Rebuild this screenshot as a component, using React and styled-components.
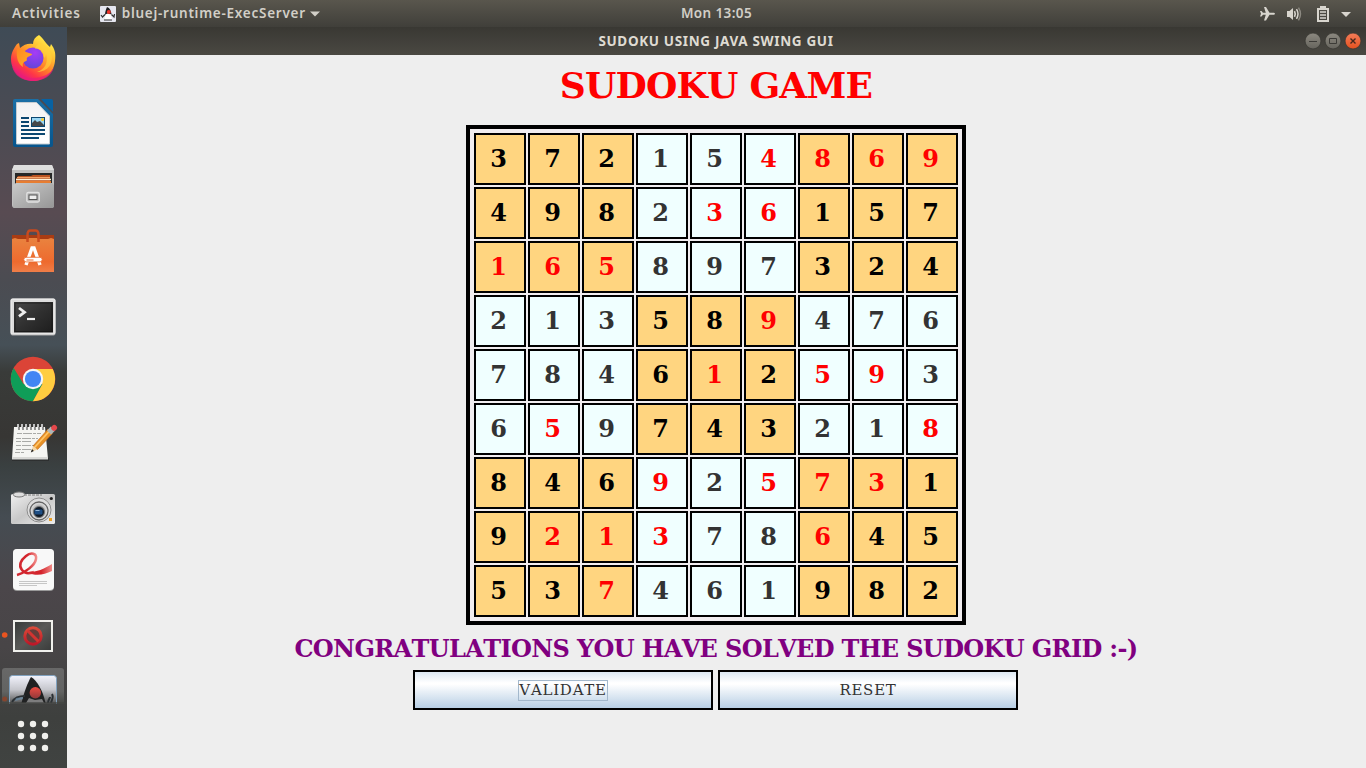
import React from 'react';
import styled, { createGlobalStyle } from 'styled-components';

const Global = createGlobalStyle`
  * { box-sizing: border-box; }
  body { margin: 0; overflow: hidden; background: #eee; }
`;

const Desktop = styled.div`
  width: 1366px;
  height: 768px;
  display: flex;
  flex-direction: column;
  font-family: "Noto Sans", sans-serif;
`;

const TopBar = styled.header`
  height: 27px;
  display: grid;
  grid-template-columns: 1fr auto 1fr;
  align-items: center;
  padding: 0 14px 0 12px;
  background: linear-gradient(#59564d, #403f3a);
  color: #dfdbd2;
`;

const BarGroup = styled.div`
  display: flex;
  align-items: center;
  justify-content: ${p => (p.$end ? 'flex-end' : 'flex-start')};
`;

const BarText = styled.span`
  font-size: 13.5px;
  line-height: 24px;
  padding-bottom: 1px;
  font-weight: 600;
  white-space: nowrap;
  letter-spacing: ${p => p.$track || '0'};
  color: #d2cfc7;
`;

const AppMenu = styled.div`
  display: flex;
  align-items: center;
  margin-left: 19px;
  & > svg:first-child { margin-right: 6px; }
  & > svg:last-child { margin-left: 4px; }
`;

const Clock = styled(BarText)`
  margin-left: 69px;
`;

const Body = styled.div`
  flex: 1;
  display: flex;
`;

const Dock = styled.nav`
  width: 67px;
  height: 741px;
  display: flex;
  flex-direction: column;
  background: linear-gradient(#3f4b56 0, #4b4b53 95px, #584b52 185px, #4b4c52 255px, #465057 318px, #393b39 345px, #373634 410px, #3a4041 440px, #454c52 490px, #4b464a 560px, #484547 620px, #3e403e 690px, #404341 741px);
  & > svg { display: block; flex: none; }
`;

const Window = styled.main`
  flex: 1;
  display: flex;
  flex-direction: column;
`;

const TitleBar = styled.div`
  height: 28px;
  display: grid;
  grid-template-columns: 1fr auto 1fr;
  align-items: center;
  padding-right: 4px;
  background: linear-gradient(#393833, #4a4842);
`;

const WindowTitle = styled.h1`
  grid-column: 2;
  margin: 0 0 0 3px;
  font-size: 13.5px;
  line-height: 27px;
  font-weight: 700;
  white-space: nowrap;
  letter-spacing: ${p => p.$track};
  color: #dfdbd2;
`;

const WindowControls = styled.div`
  display: flex;
  justify-content: flex-end;
`;

const Content = styled.section`
  flex: 1;
  display: flex;
  flex-direction: column;
  align-items: center;
  padding-right: 1px;
  background: #eee;
  font-family: "DejaVu Serif", serif;
`;

const GameTitle = styled.h2`
  margin: 9px 0 0;
  height: 61px;
  font-size: 36px;
  line-height: 42px;
  font-weight: 700;
  font-kerning: none;
  letter-spacing: -0.8px;
  white-space: nowrap;
  color: #f00;
`;

const Board = styled.div`
  display: grid;
  grid-template-columns: repeat(9, 52px);
  grid-auto-rows: 52px;
  gap: 2px;
  padding: 4px;
  border: 4px solid #000;
  background: #f1edf0;
`;

const Cell = styled.div`
  display: flex;
  align-items: center;
  justify-content: center;
  padding-right: 3px;
  border: 2px solid #000;
  font-size: 24px;
  line-height: 48px;
  font-weight: 700;
  background: ${p => (p.$shaded ? '#ffd580' : '#f0ffff')};
  color: ${p => (p.$entered ? '#f00' : p.$shaded ? '#000' : '#333')};
`;

const Message = styled.p`
  margin: 9px 0 0;
  height: 36px;
  font-size: 24px;
  line-height: 30px;
  font-weight: 700;
  font-kerning: none;
  letter-spacing: -0.65px;
  white-space: nowrap;
  color: #800080;
`;

const Actions = styled.div`
  display: flex;
  gap: 5px;
  margin-right: 2px;
`;

const Button = styled.button`
  width: 300px;
  height: 40px;
  padding: 0 0 0 1px;
  border: 2px solid #000;
  display: flex;
  align-items: center;
  justify-content: center;
  background: linear-gradient(#dde8f3 0%, #fff 30%, #fff 34%, #b8cfe5 100%);
  font: 15px/19px "DejaVu Serif", serif;
  font-kerning: none;
  letter-spacing: 0.75px;
  color: #333;
`;

const Label = styled.span`
  border: 1px solid ${p => (p.$focused ? '#a3b8cc' : 'transparent')};
`;

const DockSvg = ({ height = 64, children }) => (
  <svg width="67" height={height} viewBox={`0 0 67 ${height}`}>{children}</svg>
);

const Firefox = () => (
  <DockSvg>
    <defs>
      <linearGradient id="ffBody" x1="0.85" y1="0.05" x2="0.25" y2="0.95">
        <stop offset="0" stopColor="#fff44f" /><stop offset=".3" stopColor="#ffc131" />
        <stop offset=".58" stopColor="#ff7a2a" /><stop offset=".8" stopColor="#ff3647" /><stop offset="1" stopColor="#e31587" />
      </linearGradient>
      <linearGradient id="ffHead" x1="0" y1="0" x2="1" y2="1">
        <stop offset="0" stopColor="#ff8a20" /><stop offset="1" stopColor="#ffae28" />
      </linearGradient>
      <radialGradient id="ffGlobe" cx=".6" cy=".25" r=".9">
        <stop offset="0" stopColor="#a63cf5" /><stop offset=".6" stopColor="#7542e5" /><stop offset="1" stopColor="#5b4bc8" />
      </radialGradient>
    </defs>
    <path fill="url(#ffBody)" d="M39 8c5 4 6 8 11 12l1-3c4 5 5 10 4 17-1 12-11 20-22 20S11 45 11 32c0-6 3-11 6-15l2-1 1 5c4-4 9-5 13-4 0-4 2-7 6-9z" />
    <path fill="#e91e78" opacity=".75" d="M12 39c4 8 12 12 21 12s18-4 21-11c-2 9-11 14-21 14s-19-5-21-15z" />
    <circle cx="33" cy="31" r="10.5" fill="url(#ffGlobe)" />
    <path fill="url(#ffHead)" d="M17 22c4 0 7 1 9 3l6 2c0 2-4 2-5 4-1 1 1 2-1 3-3 1-4 3-3 6-5-3-7-9-6-18z" />
    <path fill="#ffd23c" d="M35 22c6-1 9 3 9 9 1-1 2-2 2-4 3 9-2 16-9 18 11 0 17-9 14-19l-8-9c-4-1-7 1-8 5z" opacity=".65" />
  </DockSvg>
);

const Writer = () => (
  <DockSvg>
    <defs>
      <linearGradient id="wrFrame" x2="0" y2="1"><stop stopColor="#1b6fa5" /><stop offset="1" stopColor="#06558d" /></linearGradient>
      <linearGradient id="wrPage" x2="0" y2="1"><stop stopColor="#f2f2f2" /><stop offset="1" stopColor="#fff" /></linearGradient>
    </defs>
    <path fill="url(#wrFrame)" d="M15 8h23l15 15v31q0 2-2 2H15q-2 0-2-2V10q0-2 2-2z" />
    <path fill="#0862a3" d="M41 8h10q2 0 2 2v11z" />
    <path fill="url(#wrPage)" stroke="#c6ccd0" d="M16.500 11.500h20L49.500 25v28h-33z" />
    <path stroke="#0b4770" strokeWidth="2" d="M21 27h8M21 31h8M21 35h8M21 39h24M21 43h24M21 47h18" />
    <path fill="#0b4770" d="M31 26h14v10H31z" />
    <path fill="#9ad7f4" d="M32 27h12v8H32z" />
    <circle cx="42.500" cy="28.500" r="1.500" fill="#ffc926" />
    <path fill="#45484a" d="M32 35v-3l3-3 2 2 3-1 4 4v1z" />
  </DockSvg>
);

const Files = () => (
  <DockSvg>
    <defs>
      <linearGradient id="fiFront" x2="1" y2="1"><stop stopColor="#c9c9c9" /><stop offset="1" stopColor="#969696" /></linearGradient>
    </defs>
    <path fill="#c0c0c0" d="M14 10h38l2 5v35q0 3-3 3H15q-3 0-3-3V15z" />
    <path fill="#dedede" d="M14 10h38l2 5H12z" />
    <path fill="#272727" d="M15 18h37v11H15z" />
    <path fill="#ba5321" d="M18 21h13l2-1h17v9H16v-5z" />
    <path stroke="#f4a46a" strokeWidth="1.200" d="M17 22.500h33" />
    <path stroke="#fff2d8" strokeWidth="1.500" d="M16 24.500h35" />
    <path stroke="#e77d31" strokeWidth="2" d="M16 27h35" />
    <path fill="url(#fiFront)" d="M16 28h36l2 2v21q0 2-2 2H15q-2 0-2-2V30z" />
    <rect x="26.800" y="37.500" width="12.500" height="9.500" rx="1.500" fill="#b5b5b5" stroke="#e1e1e1" strokeWidth="1.300" />
    <rect x="29" y="40" width="8" height="4.500" fill="#eee" stroke="#555" />
  </DockSvg>
);

const Software = () => (
  <DockSvg>
    <defs><linearGradient id="swBag" x2="0" y2="1"><stop stopColor="#e9833f" /><stop offset=".7" stopColor="#ee6a2e" /><stop offset="1" stopColor="#f07e48" /></linearGradient></defs>
    <path fill="#a93c13" d="M12 16h42v4H12z" />
    <path fill="url(#swBag)" d="M12 20l3-1 3 1h10l1-1h8l1 1h10l3-1 3 1v33H12z" />
    <path fill="none" stroke="#c94a1e" strokeWidth="2.500" d="M27.500 23v-7q0-4.500 3-4.500h5q3 0 3 4.500v7" />
    <path fill="none" stroke="#fff" strokeWidth="3.400" d="M26 46l6-17h2l6 17" />
    <rect x="23.800" y="38.300" width="18.400" height="4.600" rx="2.300" fill="#fff" stroke="#eb6a2e" strokeWidth=".8" />
    <path stroke="#eb6a2e" strokeWidth="1" d="M26.500 41h7" />
  </DockSvg>
);

const Terminal = () => (
  <DockSvg>
    <defs><linearGradient id="teScreen" x2="1" y2="1"><stop stopColor="#474747" /><stop offset=".5" stopColor="#303030" /><stop offset="1" stopColor="#1d1d1d" /></linearGradient></defs>
    <rect x="10.500" y="15.500" width="45" height="37" rx="2" fill="#aaa" />
    <rect x="11" y="16" width="44" height="35" rx="1.500" fill="#dcdcdc" stroke="#f3f3f3" />
    <rect x="14" y="19" width="39" height="30.500" fill="url(#teScreen)" />
    <rect x="15" y="20" width="37" height="28.500" fill="none" stroke="#111" opacity=".6" />
    <path fill="none" stroke="#eee" strokeWidth="2.800" d="M19 25l5.500 4.200-5.500 4.200" />
    <path stroke="#eee" strokeWidth="2.200" d="M27 36h8" />
  </DockSvg>
);

const Chrome = () => (
  <DockSvg>
    <circle cx="33" cy="32" r="22.300" fill="#db4437" />
    <path fill="#0f9d58" d="M13.700 21A22.300 22.300 0 0 0 33 54.300L42.500 37 33 32 23.500 37z" />
    <path fill="#ffcd40" d="M33 54.300A22.300 22.300 0 0 0 52.700 22H33v10l9.500 5z" />
    <circle cx="33" cy="32" r="10.200" fill="#f5f5f5" />
    <circle cx="33" cy="32" r="8.100" fill="#4285f4" />
  </DockSvg>
);

const Notes = () => (
  <DockSvg>
    <path fill="#222" opacity=".5" d="M12 47h37v3H12z" />
    <path fill="#f5f5f2" d="M14 16h31l3 32H12z" />
    <path fill="#d8d8d5" d="M12.200 46h35.600l.2 2.500H12z" />
    <path stroke="#a9aaa7" strokeDasharray="5 1 9 1 3 1" d="M17 22.500h24M16 27.500h22M16 30.500h15M16 34.500h19M16 38.500h15M15 41.500h9" />
    <path stroke="#eee" strokeWidth="1.500" d="M18 13v5M22 13v5M26 13v5M30 13v5M34 13v5M38 13v5M42 13v5" />
    <path stroke="#333" strokeWidth="1" d="M19 16v3M23 16v3M27 16v3M31 16v3M35 16v3M39 16v3M43 16v3" />
    <path fill="#e79125" stroke="#bd6215" strokeWidth=".6" d="M33 35L48 18l4.500 4.500-15 16z" />
    <path stroke="#ffc468" strokeWidth="1.800" d="M34.500 36.500L49.500 20" />
    <path fill="#f5d6a4" d="M33 35l4.500 3.500-6.500 2.500z" /><path fill="#222" d="M32 38l1.800 2-3 1.500z" />
    <path stroke="#aeb6b8" strokeWidth="6" d="M49 21.500l4-4" />
    <path stroke="#e5474a" strokeWidth="5.500" strokeLinecap="round" d="M54 17l.3-.3" />
  </DockSvg>
);

const Camera = () => (
  <DockSvg>
    <defs>
      <linearGradient id="caBody" x2="1" y2="1"><stop stopColor="#f0f0f0" /><stop offset=".5" stopColor="#c8c8c8" /><stop offset="1" stopColor="#ededed" /></linearGradient>
      <radialGradient id="caLens"><stop stopColor="#091629" /><stop offset=".4" stopColor="#152f50" /><stop offset=".5" stopColor="#aaa" /><stop offset="1" stopColor="#ececec" /></radialGradient>
    </defs>
    <rect x="11" y="19" width="44" height="30" rx="1.500" fill="url(#caBody)" />
    <path stroke="#777" strokeDasharray="3 1" d="M24 20h18" />
    <ellipse cx="19" cy="19.500" rx="5.800" ry="2.500" fill="#ddd" stroke="#777" />
    <circle cx="39" cy="35" r="12" fill="#ddd" stroke="#8e8e8e" />
    <circle cx="39" cy="36" r="9" fill="url(#caLens)" stroke="#646464" strokeWidth="1.300" />
    <circle cx="39" cy="37" r="5.500" fill="#111b27" stroke="#777" />
    <rect x="34.500" y="34.500" width="8" height="5" rx="1" fill="#1e4e84" />
    <path stroke="#8fb3d7" d="M35.500 35.500h4" />
    <circle cx="51.300" cy="23.500" r="1.600" fill="#202020" /><path fill="#eca126" d="M49 43h3v3h-3z" />
  </DockSvg>
);

const Evince = () => (
  <DockSvg>
    <defs><linearGradient id="evRed"><stop stopColor="#d12b33" /><stop offset=".55" stopColor="#d4232b" /><stop offset="1" stopColor="#f18b88" /></linearGradient></defs>
    <rect x="13" y="10" width="41" height="42" rx="4" fill="#999" />
    <rect x="13" y="10" width="41" height="41" rx="4" fill="#f8f8f8" />
    <path fill="none" stroke="url(#evRed)" strokeWidth="2.500" d="M17 36c7-2 18-9 19-16 1-6-5-7-10-3s-8 9-4 14c3 4 7 4 12 2" />
    <path fill="url(#evRed)" d="M28 33c9 0 16-3 24-8v7c-8 4-16 5-24 2z" />
    <path stroke="#c6c6c6" d="M19 42.500h28M19 44.500h28M19 46.500h18" />
  </DockSvg>
);

const BlockedScreen = () => (
  <DockSvg>
    <defs>
      <linearGradient id="bsFill" x2="1" y2="1"><stop stopColor="#373a39" /><stop offset=".5" stopColor="#595957" /><stop offset="1" stopColor="#393b3a" /></linearGradient>
      <linearGradient id="bsRed" x2="0" y2="1"><stop stopColor="#d94b39" /><stop offset="1" stopColor="#bd1828" /></linearGradient>
    </defs>
    <circle cx="4.700" cy="32" r="2.800" fill="#e95420" />
    <rect x="14" y="18" width="38" height="30" fill="url(#bsFill)" stroke="#f0f0ec" strokeWidth="2" />
    <circle cx="33" cy="33" r="8.200" fill="#653d3a" stroke="url(#bsRed)" strokeWidth="3" />
    <path stroke="#d33431" strokeWidth="3" d="M27.500 27.500l11 11" />
  </DockSvg>
);

const Duke = () => (
  <DockSvg height={37}>
    <defs>
      <linearGradient id="duTile" x2="0" y2="1"><stop stopColor="#f2f3fc" /><stop offset=".5" stopColor="#c5c6cc" /><stop offset="1" stopColor="#4d4e4e" /></linearGradient>
      <linearGradient id="duNose" x2="0" y2="1"><stop stopColor="#ee4b42" /><stop offset="1" stopColor="#92393a" /></linearGradient>
      <linearGradient id="duShelf" x2="0" y2="1"><stop stopColor="#686868" /><stop offset=".65" stopColor="#626362" /><stop offset="1" stopColor="#454744" /></linearGradient>
    </defs>
    <path fill="url(#duShelf)" d="M2 37V4q0-3 3-3h56q3 0 3 3v33z" />
    <circle cx="4.700" cy="32" r="2.500" fill="#85452f" />
    <path fill="url(#duTile)" stroke="#81a2c0" d="M9.500 37V11.500q0-3 3-3h41q3 0 3 3V37" />
    <path fill="#202122" d="M31 10c6 3 12 14 14.500 26H21.500C24 25 28 15 31 10z" />
    <path fill="#a5a5a5" d="M29 31l6 2 7-1 2 4H26z" opacity=".7" />
    <circle cx="35.300" cy="25.700" r="5.700" fill="url(#duNose)" />
    <path fill="none" stroke="#2b3034" strokeWidth="2" d="M12 35c3-5 8-6 13-6M48 36c0-4 2-4 2-6M51 36c1-4 3-6 1-9" />
    <path fill="#6689a2" d="M16 31l7-1 0 2-8 2z" opacity=".7" />
    <path fill="#424441" d="M0 35h67v2H0z" opacity=".65" />
  </DockSvg>
);

const AppsGrid = () => (
  <DockSvg>
    {[20, 32, 44].map(y => [21, 33, 45].map(x => <circle key={`${x}-${y}`} cx={x} cy={y} r="3.200" fill="#f0f0ed" />))}
  </DockSvg>
);

const DukeSmall = () => (
  <svg width="16" height="16" viewBox="0 0 16 16">
    <rect width="16" height="16" rx="1" fill="#e6e7f0" />
    <path fill="#1e1e20" d="M7 1c3 1 4 4 4.500 7L9 9 7 8 5 9c0-3 1-6 2-8z" />
    <path fill="#fff" d="M5.500 8.500l2-1 3.500 1 1 5H4.500z" />
    <path fill="none" stroke="#333" strokeWidth="1.200" d="M5 8.500L2.500 11 1 9M11.500 8.500L14 11l.5-3M4 14h8" />
    <circle cx="8.800" cy="6" r="2" fill="#ed332c" />
  </svg>
);

const Caret = () => (
  <svg width="10" height="6" viewBox="0 0 10 6"><path fill="#d2cfc7" d="M0 .5h10L5 5.500z" /></svg>
);

const StatusIcons = () => (
  <svg width="92" height="20" viewBox="0 0 92 20">
    <path fill="#d8d5ce" d="M14 8.800H9.500L6 3H4l1.800 5.800H3L1.500 7H0l1 2.800-1 2.800h1.500L3 10.800h2.800L4 16.600h2l3.500-5.800H14q2-1 0-2z" />
    <path fill="#d8d5ce" d="M27 7h2.500L33 4v12l-3.500-3H27z" />
    <path fill="none" stroke="#d8d5ce" strokeWidth="1.600" d="M34.500 7.200q1.500 2.800 0 5.600" />
    <path fill="none" stroke="#d8d5ce" strokeWidth="1.500" d="M36.500 5.200q3 4.800 0 9.600" />
    <path fill="none" stroke="#8d8a82" strokeWidth="1.400" d="M38.500 3.700q4 6.300 0 12.600" />
    <path fill="#d8d5ce" fillRule="evenodd" d="M60 2h6v2h3v14H57V4h3zm-1 4v10h8V6z" />
    <path stroke="#d8d5ce" strokeWidth="1.500" d="M60 8h6M60 11h6M60 14h6" />
    <path fill="#d8d5ce" d="M81 8h10l-5 5z" />
  </svg>
);

const Controls = () => (
  <svg width="58" height="20" viewBox="0 0 58 20">
    <defs>
      <linearGradient id="ctlGrey" x2="0" y2="1"><stop stopColor="#8c8980" /><stop offset="1" stopColor="#66645d" /></linearGradient>
      <linearGradient id="ctlClose" x2="0" y2="1"><stop stopColor="#f47d59" /><stop offset="1" stopColor="#e5511f" /></linearGradient>
    </defs>
    <circle cx="9" cy="10" r="7.900" fill="url(#ctlGrey)" stroke="#33322e" strokeWidth=".6" />
    <circle cx="29" cy="10" r="7.900" fill="url(#ctlGrey)" stroke="#33322e" strokeWidth=".6" />
    <circle cx="49" cy="10" r="7.900" fill="url(#ctlClose)" stroke="#33322e" strokeWidth=".6" />
    <path fill="none" stroke="#3c3b37" d="M5 10.500h8M25.500 7.500h7v5h-7z" />
    <path stroke="#46271c" strokeWidth="1.400" d="M46.500 7.500l5 5M51.500 7.500l-5 5" />
  </svg>
);

const dockItems = [Firefox, Writer, Files, Software, Terminal, Chrome, Notes, Camera, Evince, BlockedScreen, Duke, AppsGrid];

const rows = ['372154869', '498236157', '165897324', '213589476', '784612593', '659743218', '846925731', '921378645', '537461982'];

/* "x" marks the numbers entered by the player. */
const entered = ['.....xxxx', '....xx...', 'xxx......', '.....x...', '....x.xx.', '.x......x', '...x.xxx.', '.xxx..x..', '..x......'];

export default function App() {
  return (
    <Desktop>
      <Global />
      <TopBar>
        <BarGroup>
          <BarText $track="0.85px">Activities</BarText>
          <AppMenu>
            <DukeSmall />
            <BarText $track="0.74px">bluej-runtime-ExecServer</BarText>
            <Caret />
          </AppMenu>
        </BarGroup>
        <Clock $track="0.4px">Mon 13:05</Clock>
        <BarGroup $end><StatusIcons /></BarGroup>
      </TopBar>
      <Body>
        <Dock>{dockItems.map((Item, i) => <Item key={i} />)}</Dock>
        <Window>
          <TitleBar>
            <WindowTitle $track="0.65px">SUDOKU USING JAVA SWING GUI</WindowTitle>
            <WindowControls><Controls /></WindowControls>
          </TitleBar>
          <Content>
            <GameTitle>SUDOKU GAME</GameTitle>
            <Board>
              {rows.map((row, r) => [...row].map((digit, c) => (
                <Cell
                  key={`${r}${c}`}
                  $shaded={(Math.floor(r / 3) + Math.floor(c / 3)) % 2 === 0}
                  $entered={entered[r][c] === 'x'}
                >
                  {digit}
                </Cell>
              )))}
            </Board>
            <Message>CONGRATULATIONS YOU HAVE SOLVED THE SUDOKU GRID :-)</Message>
            <Actions>
              <Button><Label $focused>VALIDATE</Label></Button>
              <Button><Label>RESET</Label></Button>
            </Actions>
          </Content>
        </Window>
      </Body>
    </Desktop>
  );
}
